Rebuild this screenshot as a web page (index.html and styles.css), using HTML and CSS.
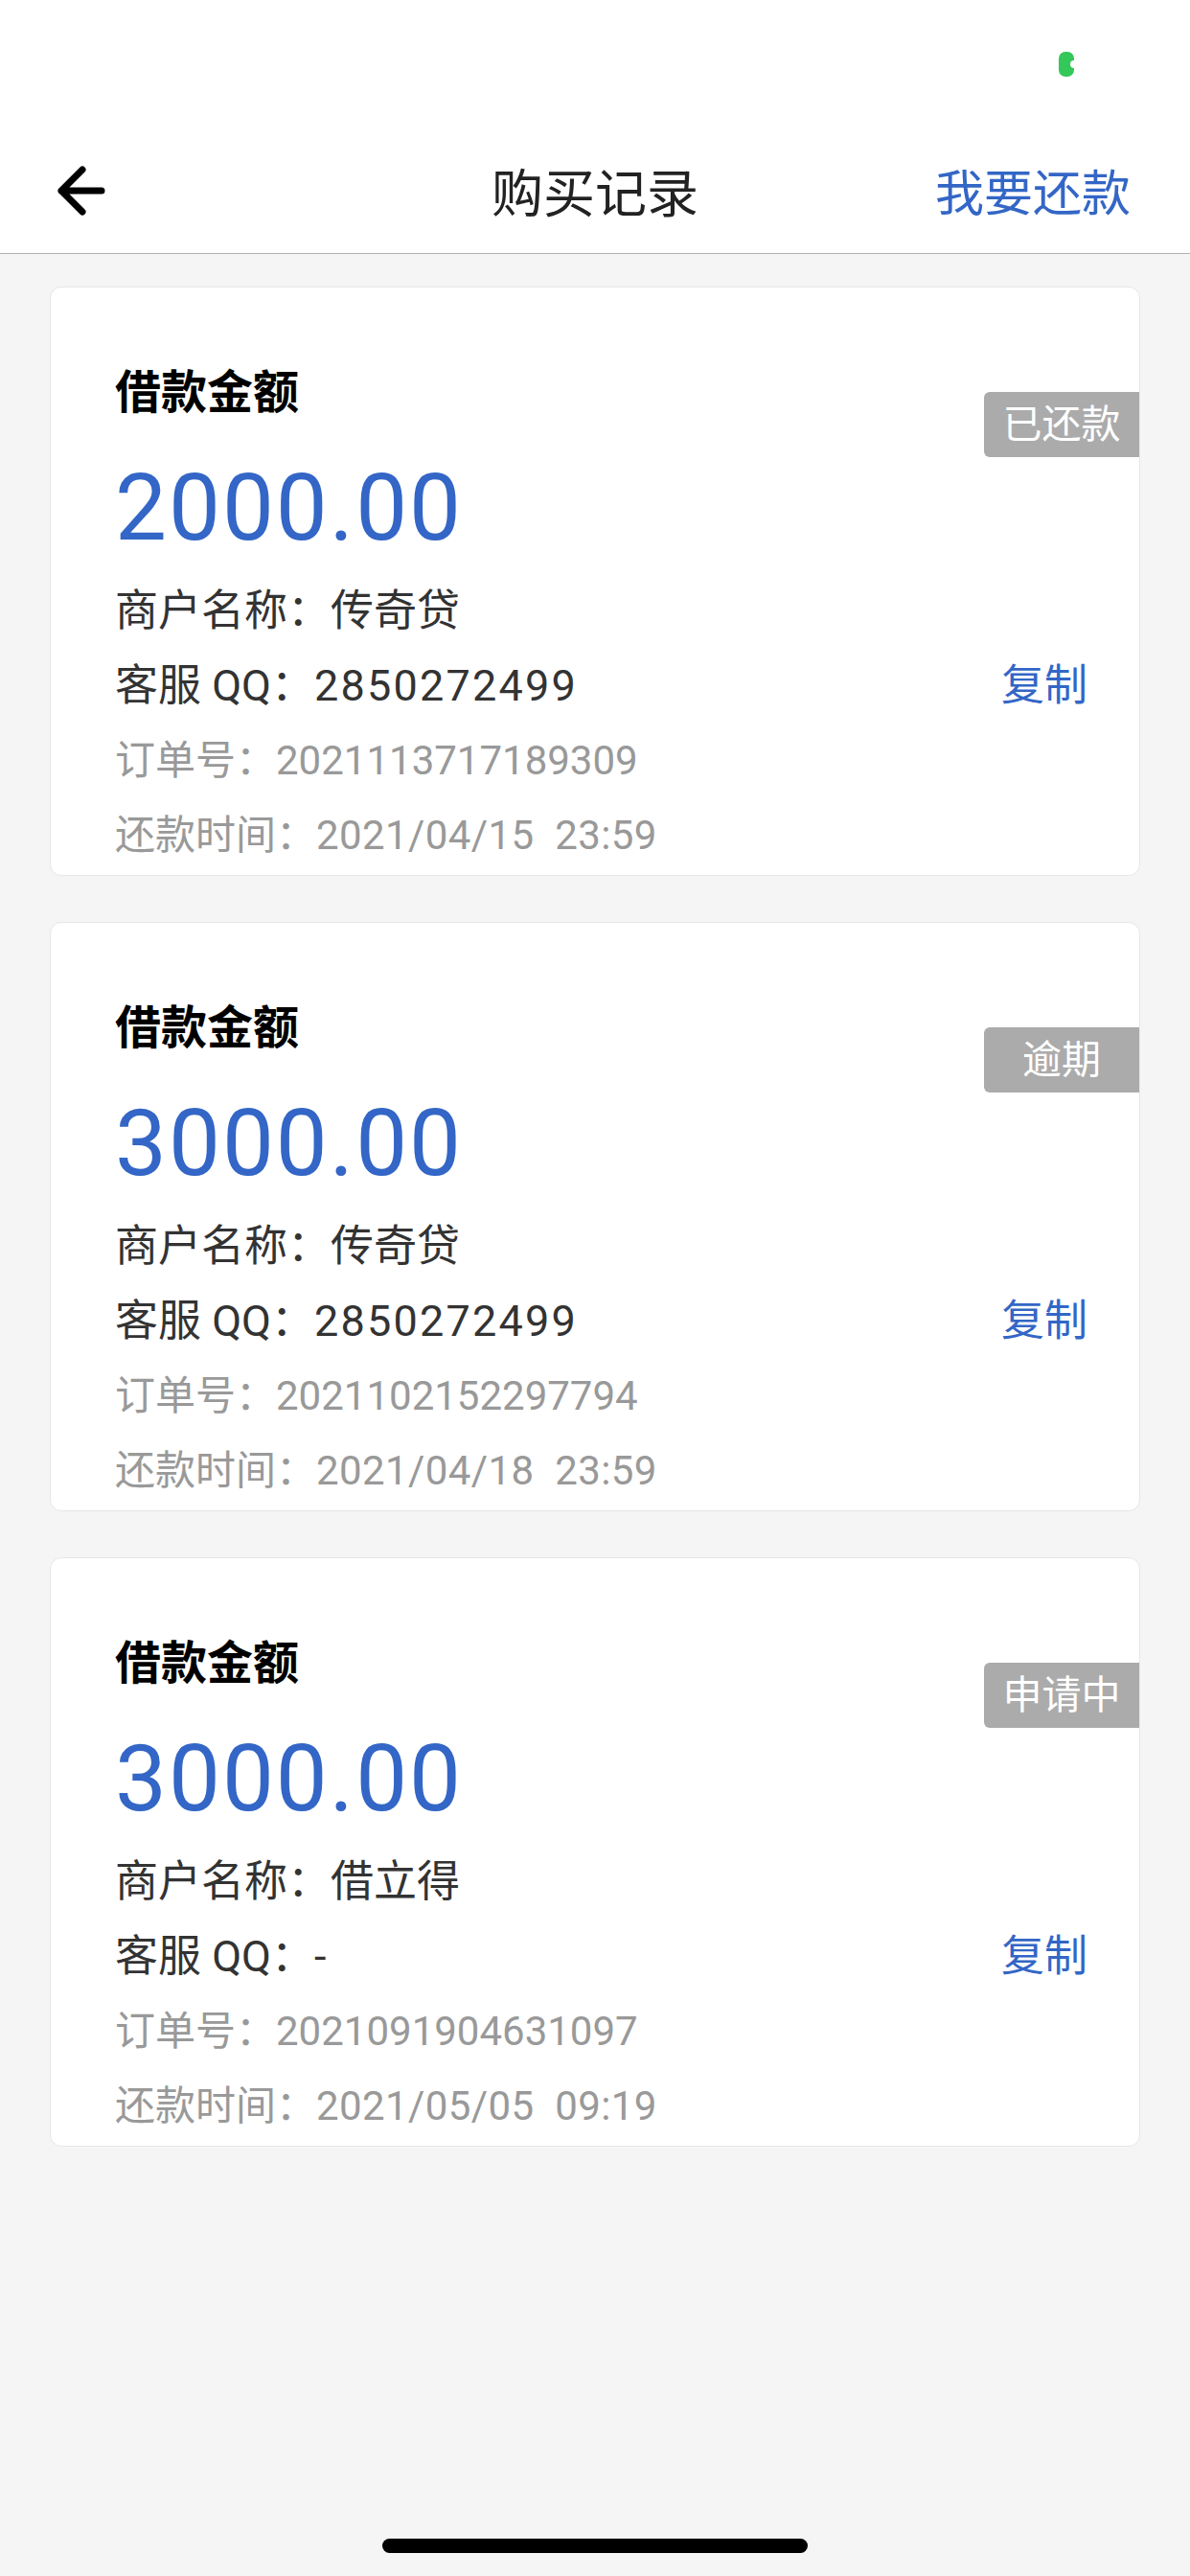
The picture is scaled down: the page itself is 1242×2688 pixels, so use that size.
FILE: index.html
```html
<!DOCTYPE html>
<html lang="zh-CN">
<head>
    <meta charset="UTF-8">
    <meta name="viewport" content="width=device-width, initial-scale=1.0">
    <title>购买记录</title>
    <link rel="stylesheet" href="styles.css">
</head>
<body>
    <div class="page">
        <div class="status-bar">
            <svg class="cam-dot" width="16" height="26" viewBox="0 0 16 26">
                <path d="M7 0 H9 A7 7 0 0 1 16 7 V9 A4 4 0 0 0 16 17 V19 A7 7 0 0 1 9 26 H7 A7 7 0 0 1 0 19 V7 A7 7 0 0 1 7 0 Z" fill="#34c759"/>
            </svg>
        </div>
        <header class="nav">
            <a class="back" href="#">
                <svg width="52" height="56" viewBox="0 0 52 56">
                    <path d="M48 28 H6 M28 6 L6 28 L28 50" fill="none" stroke="#000" stroke-width="7" stroke-linecap="round" stroke-linejoin="round"/>
                </svg>
            </a>
            <h1>购买记录</h1>
            <a class="repay" href="#">我要还款</a>
        </header>

        <main class="list">
            <section class="card">
                <span class="badge">已还款</span>
                <h2 class="card-label">借款金额</h2>
                <div class="amount">2000.00</div>
                <p class="row">商户名称：传奇贷</p>
                <p class="row row-qq"><span>客服 QQ：<span class="num">2850272499</span></span><a class="copy" href="#">复制</a></p>
                <p class="row muted">订单号：2021113717189309</p>
                <p class="row muted">还款时间：<span class="date">2021/04/15&nbsp;&nbsp;23:59</span></p>
            </section>

            <section class="card">
                <span class="badge">逾期</span>
                <h2 class="card-label">借款金额</h2>
                <div class="amount">3000.00</div>
                <p class="row">商户名称：传奇贷</p>
                <p class="row row-qq"><span>客服 QQ：<span class="num">2850272499</span></span><a class="copy" href="#">复制</a></p>
                <p class="row muted">订单号：2021102152297794</p>
                <p class="row muted">还款时间：<span class="date">2021/04/18&nbsp;&nbsp;23:59</span></p>
            </section>

            <section class="card">
                <span class="badge">申请中</span>
                <h2 class="card-label">借款金额</h2>
                <div class="amount">3000.00</div>
                <p class="row">商户名称：借立得</p>
                <p class="row row-qq"><span>客服 QQ：<span class="num">-</span></span><a class="copy" href="#">复制</a></p>
                <p class="row muted">订单号：2021091904631097</p>
                <p class="row muted">还款时间：<span class="date">2021/05/05&nbsp;&nbsp;09:19</span></p>
            </section>
        </main>

        <div class="home-area">
            <span class="home-bar"></span>
        </div>
    </div>
</body>
</html>
```

FILE: styles.css
```css
body {
    margin: 0;
    padding: 0;
    font-family: Roboto, "Noto Sans CJK SC", sans-serif;
    background: #f5f5f5;
    color: #333;
}

a {
    text-decoration: none;
}

.page {
    min-height: 2688px;
    display: flex;
    flex-direction: column;
}

.status-bar {
    height: 132px;
    background: #fff;
    display: flex;
    justify-content: flex-end;
    padding-right: 121px;
}

.cam-dot {
    margin-top: 54px;
}

.nav {
    height: 132px;
    background: #fff;
    border-bottom: 1px solid #b0b0b0;
    display: grid;
    grid-template-columns: 1fr auto 1fr;
    align-items: center;
}

.back {
    display: flex;
    padding-left: 58px;
    margin-top: 1px;
}

.nav h1 {
    margin: 0;
    font-size: 54px;
    font-weight: normal;
    color: #222;
}

.repay {
    justify-self: end;
    padding-right: 62px;
    font-size: 51px;
    color: #3366c6;
}

.list {
    padding: 34px 52px 0;
    display: flex;
    flex-direction: column;
    gap: 48px;
}

.card {
    position: relative;
    background: #fff;
    border: 1px solid #e6e6e6;
    border-radius: 12px;
    padding: 80px 54px 2px 67px;
}

.badge {
    position: absolute;
    top: 109px;
    right: 0;
    width: 162px;
    height: 68px;
    line-height: 68px;
    text-align: center;
    font-size: 41px;
    color: #fff;
    background: #ababab;
    border-radius: 6px 0 0 6px;
}

.card-label {
    margin: 0;
    font-size: 48px;
    line-height: 60px;
    font-weight: 600;
    color: #000;
}

.amount {
    margin-top: 35px;
    font-size: 96px;
    line-height: 110px;
    letter-spacing: 2px;
    color: #3366c6;
}

.row {
    margin: 0;
    font-size: 45px;
    line-height: 78px;
    color: #333;
}

.amount + .row {
    margin-top: 14px;
}

.row-qq {
    display: flex;
    justify-content: space-between;
}

.num {
    letter-spacing: 2.2px;
}

.copy {
    color: #3366c6;
}

.muted {
    font-size: 42px;
    color: #999;
}

.date {
    letter-spacing: 0.4px;
}

.home-area {
    margin-top: auto;
    height: 39px;
    display: flex;
    justify-content: center;
}

.home-bar {
    width: 444px;
    height: 15px;
    border-radius: 8px;
    background: #000;
}
```
